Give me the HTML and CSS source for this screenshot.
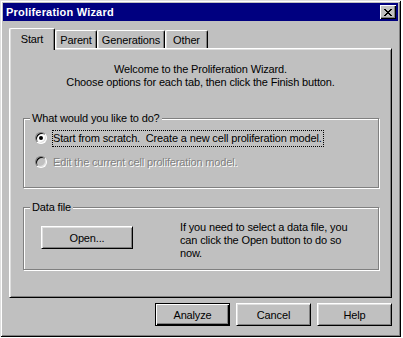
FILE: index.html
```html
<!DOCTYPE html>
<html>
  <head>
    <meta charset="utf-8" />
    <title>Proliferation Wizard</title>
    <link rel="stylesheet" href="styles.css">
  </head>
  <body>
    <div class="window">
      <div class="titlebar">
        <span class="title">Proliferation Wizard</span>
        <span class="close">
          <svg width="8" height="7" viewBox="0 0 8 7" shape-rendering="crispEdges">
            <path d="M0 0h2v1H0zM6 0h2v1H6zM1 1h2v1H1zM5 1h2v1H5zM2 2h4v1H2zM3 3h2v1H3zM2 4h4v1H2zM1 5h2v1H1zM5 5h2v1H5zM0 6h2v1H0zM6 6h2v1H6z" fill="#000"/>
          </svg>
        </span>
      </div>

      <div class="tabs">
        <div class="tab active">Start</div>
        <div class="tab tab-parent">Parent</div>
        <div class="tab tab-generations">Generations</div>
        <div class="tab tab-other">Other</div>
      </div>

      <div class="panel">
        <p class="welcome">Welcome to the Proliferation Wizard.<br>Choose options for each tab, then click the Finish button.</p>

        <fieldset class="group group-task">
          <legend>What would you like to do?</legend>
          <div class="option">
            <span class="radio checked"></span>
            <span class="option-text focused">Start from scratch.&nbsp; Create a new cell proliferation model.</span>
          </div>
          <div class="option disabled">
            <span class="radio"></span>
            <span class="option-text">Edit the current cell proliferation model.</span>
          </div>
        </fieldset>

        <fieldset class="group group-data">
          <legend>Data file</legend>
          <div class="data-row">
            <button class="btn btn-open">Open...</button>
            <p class="data-hint">If you need to select a data file, you<br>can click the Open button to do so<br>now.</p>
          </div>
        </fieldset>
      </div>

      <div class="actions">
        <button class="btn btn-default">Analyze</button>
        <button class="btn">Cancel</button>
        <button class="btn">Help</button>
      </div>
    </div>
  </body>
</html>
```

FILE: styles.css
```css
body {
  margin: 0;
  background: #fff;
  font-family: "Liberation Sans", Arial, sans-serif;
  font-size: 11px;
  letter-spacing: -0.15px;
  color: #000;
}
.window {
  width: 401px;
  height: 337px;
  box-sizing: border-box;
  padding: 3px;
  background: #c0c0c0;
  box-shadow: inset 1px 1px #dfdfdf, inset -1px -1px #000,
    inset 2px 2px #fff, inset -2px -2px #808080;
}
.titlebar {
  height: 18px;
  background: #000080;
  display: flex;
  align-items: center;
  justify-content: space-between;
  padding: 0 2px 0 3px;
}
.title {
  color: #fff;
  font-weight: bold;
  font-size: 11px;
  letter-spacing: 0.2px;
}
.close {
  width: 16px;
  height: 14px;
  box-sizing: border-box;
  background: #c0c0c0;
  display: flex;
  align-items: center;
  justify-content: center;
  box-shadow: inset 1px 1px #fff, inset -1px -1px #000, inset -2px -2px #808080;
}

/* tab strip */
.tabs {
  display: flex;
  align-items: flex-end;
  height: 20px;
  margin: 7px 0 0 6px;
}
.tab {
  height: 18px;
  box-sizing: border-box;
  border-left: 1px solid #fff;
  border-top: 1px solid #fff;
  border-right: 1px solid #000;
  border-radius: 2px 2px 0 0;
  box-shadow: inset 1px 0 #dfdfdf, inset -1px 0 #808080;
  display: flex;
  align-items: center;
  justify-content: center;
  padding-top: 1px;
}
.tab.active {
  width: 46px;
  height: 22px;
  margin-bottom: -2px;
  padding-bottom: 3px;
  background: #c0c0c0;
  position: relative;
  z-index: 1;
}
.tab-parent { width: 42px; }
.tab-generations { width: 68px; }
.tab-other { width: 43px; }

.panel {
  width: 383px;
  height: 250px;
  margin-left: 6px;
  box-sizing: border-box;
  border: 1px solid;
  border-color: #fff #000 #000 #fff;
  box-shadow: inset 1px 1px #dfdfdf, inset -1px -1px #808080;
  padding-top: 14px;
}
.welcome {
  margin: 0;
  text-align: center;
  line-height: 13px;
}

/* etched group boxes */
.group {
  margin: 0 12px 0 13px;
  padding: 5px 0 17px 0;
  min-width: 0;
  border: 1px solid #808080;
  box-shadow: inset 1px 1px #fff, 1px 1px #fff;
}
.group legend {
  margin-left: 6px;
  padding: 0 2px;
  line-height: 13px;
  background: #c0c0c0;
}
.group-task { margin-top: 23px; }
.group-data {
  margin-top: 13px;
  padding: 12px 0 9px 0;
}

.option {
  display: flex;
  align-items: center;
  height: 16px;
  margin-left: 11px;
}
.option + .option { margin-top: 8px; }
.radio {
  width: 12px;
  height: 12px;
  box-sizing: border-box;
  border-radius: 50%;
  border: 1px solid;
  border-color: #808080 #fff #fff #808080;
  box-shadow: inset 1px 1px #000, inset -1px -1px #dfdfdf;
  background: #fff;
  display: flex;
  align-items: center;
  justify-content: center;
}
.radio.checked::after {
  content: "";
  width: 4px;
  height: 4px;
  border-radius: 50%;
  background: #000;
}
.option-text {
  margin-left: 5px;
  padding: 1px 1px 1px 0;
  border: 1px dotted transparent;
  line-height: 13px;
}
.option-text.focused { border-color: #000; }
.option.disabled .radio { background: #c0c0c0; }
.option.disabled .option-text {
  color: #808080;
  text-shadow: 1px 1px #fff;
}

.data-row {
  display: flex;
  align-items: flex-start;
  margin-left: 17px;
}
.data-hint {
  margin: -5px 0 0 47px;
  line-height: 13px;
}

/* push buttons */
.btn {
  width: 75px;
  height: 23px;
  padding: 0;
  font: inherit;
  letter-spacing: inherit;
  color: #000;
  background: #c0c0c0;
  border: 1px solid;
  border-color: #fff #000 #000 #fff;
  box-shadow: inset 1px 1px #dfdfdf, inset -1px -1px #808080;
}
.btn-open { width: 92px; }
.btn-default {
  border-color: #000;
  box-shadow: inset 1px 1px #fff, inset -1px -1px #000, inset -2px -2px #808080;
}
.actions {
  display: flex;
  justify-content: flex-end;
  gap: 6px;
  width: 383px;
  margin: 5px 0 0 6px;
}
```
